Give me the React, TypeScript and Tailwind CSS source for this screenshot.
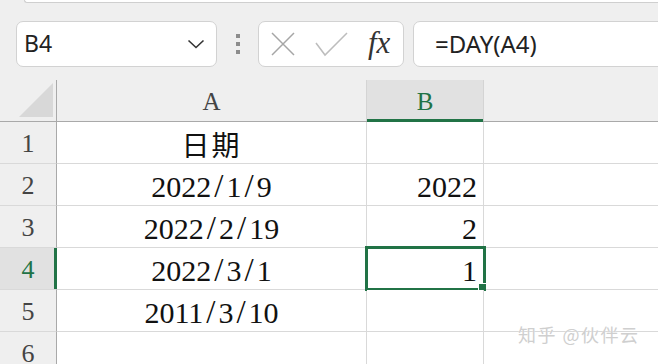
import React from 'react';

// Excel-style sheet: name box + formula bar + a small grid with B4 selected

const rows = [
  { n: 1, a: '日期', b: '' },
  { n: 2, a: '2022/1/9', b: '2022' },
  { n: 3, a: '2022/2/19', b: '2' },
  { n: 4, a: '2022/3/1', b: '1' },
  { n: 5, a: '2011/3/10', b: '' },
  { n: 6, a: '', b: '' },
];

const serif = { fontFamily: '"Liberation Serif", "Noto Sans CJK SC", serif' };

const DateText: React.FC<{ text: string }> = ({ text }) => {
  const parts = text.split('/');
  return (
    <span>
      {parts.map((p, i) => (
        <React.Fragment key={i}>
          {i > 0 && <span className="mx-[3px] text-[33px] leading-none">/</span>}
          {p}
        </React.Fragment>
      ))}
    </span>
  );
};

export default function App() {
  return (
    <div
      className="w-[658px] h-[364px] overflow-hidden bg-[#efefef] flex flex-col"
      style={{ fontFamily: '"Noto Sans", "Open Sans", sans-serif' }}
    >
      {/* bottom edge of ribbon box */}
      <div className="h-[3px] ml-[24px] bg-white border-b border-l border-[#cfcfcf] rounded-bl-[6px] shrink-0" />

      {/* formula bar */}
      <div className="flex items-center pt-[16px] h-[65px] shrink-0">
        <div className="ml-[16px] w-[201px] h-[46px] bg-white border border-[#d2d2d2] rounded-[7px] flex items-center pl-[7px] pr-[10px] shrink-0">
          <span className="text-[23px] text-[#222] flex-1 leading-none">B4</span>
          <svg width="18" height="10" viewBox="0 0 18 10" className="mr-[1px]">
            <polyline points="1.5,1.5 9,8.5 16.5,1.5" fill="none" stroke="#333" strokeWidth="1.6" />
          </svg>
        </div>
        <div className="w-[41px] flex flex-col items-center gap-[4px] shrink-0">
          <div className="w-[4px] h-[4px] bg-[#8c8c8c]" />
          <div className="w-[4px] h-[4px] bg-[#8c8c8c]" />
          <div className="w-[4px] h-[4px] bg-[#8c8c8c]" />
        </div>
        <div className="w-[146px] h-[46px] bg-white border border-[#d2d2d2] rounded-[7px] flex items-center shrink-0">
          <svg width="24" height="24" viewBox="0 0 24 24" className="ml-[12px]">
            <path d="M1 1 L23 23 M23 1 L1 23" stroke="#a6a6a6" strokeWidth="1.5" fill="none" />
          </svg>
          <svg width="33" height="25" viewBox="0 0 33 25" className="ml-[20px] mt-[1px]">
            <polyline points="1,11 10,23 32,1" stroke="#bdbdbd" strokeWidth="1.5" fill="none" />
          </svg>
          <span
            className="ml-[20px] text-[31px] italic text-[#333] leading-none -mt-[3px]"
            style={{ fontFamily: '"Liberation Serif", serif' }}
          >
            fx
          </span>
        </div>
        <div className="ml-[9px] w-[280px] h-[46px] bg-white border border-[#d2d2d2] rounded-[7px] flex items-center pl-[21px] shrink-0">
          <span className="text-[24px] text-[#222] leading-none">=DAY(A4)</span>
        </div>
      </div>

      {/* sheet */}
      <div className="mt-[12px] flex flex-col relative" style={serif}>
        {/* column headers */}
        <div className="flex h-[42px] border-b border-[#a9a9a9]">
          <div className="w-[57px] border-r border-[#a9a9a9] flex items-end justify-end pr-[3px] pb-[4px] shrink-0">
            <svg width="34" height="34" viewBox="0 0 34 34">
              <polygon points="34,0 34,34 0,34" fill="#d8d8d8" />
            </svg>
          </div>
          <div className="w-[310px] border-r border-[#d4d4d4] flex items-center justify-center text-[25px] text-[#444] shrink-0 pt-[2px]">
            A
          </div>
          <div className="w-[117px] bg-[#e1e1e1] border-r border-[#d4d4d4] flex items-center justify-center text-[25px] text-[#217346] shrink-0 relative pt-[2px]">
            B
            <div className="absolute left-0 right-0 -bottom-[1px] h-[3px] bg-[#217346]" />
          </div>
          <div className="flex-1" />
        </div>

        {rows.map((r) => {
          const sel = r.n === 4;
          return (
            <div key={r.n} className="flex h-[42px] shrink-0">
              <div
                className={
                  'w-[57px] border-r border-[#a9a9a9] border-b border-b-[#d9d9d9] flex items-center justify-center text-[26px] shrink-0 relative pt-[2px] ' +
                  (sel ? 'bg-[#e1e1e1] text-[#217346]' : 'text-[#444]')
                }
              >
                {r.n}
                {sel && <div className="absolute -right-[1px] top-0 bottom-0 w-[3px] bg-[#217346]" />}
              </div>
              <div className="w-[310px] bg-white border-r border-b border-[#d9d9d9] flex items-center justify-center text-[30px] text-[#111] shrink-0 pt-[3px]">
                {r.n === 1 ? (
                  <span className="text-[28px] tracking-[2px]" style={{ fontFamily: '"Noto Sans CJK SC", serif' }}>
                    {r.a}
                  </span>
                ) : (
                  <DateText text={r.a} />
                )}
              </div>
              <div className="w-[117px] bg-white border-r border-b border-[#d9d9d9] flex items-center justify-end pr-[6px] text-[30px] text-[#111] shrink-0 relative pt-[3px]">
                {r.b}
                {sel && (
                  <div className="absolute -left-[2px] -top-[2px] w-[121px] h-[45px] border-[3px] border-[#217346]">
                    <div className="absolute -right-[3px] -bottom-[3px] w-[8px] h-[8px] bg-[#217346] border-l border-t border-white" />
                  </div>
                )}
              </div>
              <div className="flex-1 bg-white border-b border-[#d9d9d9]" />
            </div>
          );
        })}

        {/* watermark */}
        <div
          className="absolute left-[518px] top-[241px] text-[18px] text-[#cfcfcf] tracking-[1.5px]"
          style={{ fontFamily: '"Noto Sans CJK SC", sans-serif', textShadow: '0 0 1px #fff' }}
        >
          知乎 @伙伴云
        </div>
      </div>
    </div>
  );
}
